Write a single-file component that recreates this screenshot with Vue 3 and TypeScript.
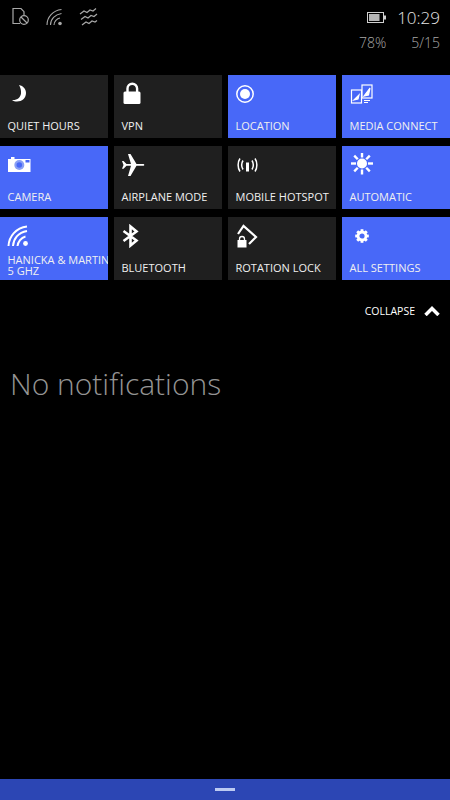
<script setup lang="ts">
interface Tile {
  label: string
  icon: string
  on?: boolean
}

const tiles: Tile[] = [
  { label: 'QUIET HOURS', icon: 'moon' },
  { label: 'VPN', icon: 'lock' },
  { label: 'LOCATION', icon: 'location', on: true },
  { label: 'MEDIA CONNECT', icon: 'media', on: true },
  { label: 'CAMERA', icon: 'camera', on: true },
  { label: 'AIRPLANE MODE', icon: 'plane' },
  { label: 'MOBILE HOTSPOT', icon: 'hotspot' },
  { label: 'AUTOMATIC', icon: 'sun', on: true },
  { label: 'HANICKA & MARTIN 5 GHZ', icon: 'wifi', on: true },
  { label: 'BLUETOOTH', icon: 'bluetooth' },
  { label: 'ROTATION LOCK', icon: 'rotation' },
  { label: 'ALL SETTINGS', icon: 'gear', on: true },
]

const sunRays = [0, 45, 90, 135, 180, 225, 270, 315]
const gearTeeth = [0, 45, 90, 135, 180, 225, 270, 315]
</script>

<template>
  <div class="screen">
    <div class="status">
      <div class="status-icons">
        <svg width="20" height="20" viewBox="0 0 20 20" fill="none" stroke="#a8a8a8" stroke-width="1.2">
          <path d="M9 16.500H2V1.500h8l3 3.200V8" />
          <circle cx="13" cy="13" r="4.300" />
          <path d="M10 10l6 6" />
        </svg>
        <svg width="20" height="20" viewBox="0 0 20 20" fill="none" stroke="#a8a8a8" stroke-width="1.1">
          <path d="M2 18C2 10 8 3.500 16.500 2.500" />
          <path d="M5.500 18C5.500 12 10 7.500 16.500 6.500" />
          <path d="M9 18C9 14.500 12 11.500 15 11" />
          <circle cx="15" cy="16.500" r="1.800" fill="#a8a8a8" stroke="none" />
        </svg>
        <svg class="waves" width="20" height="20" viewBox="0 0 20 20" fill="none" stroke="#a8a8a8" stroke-width="1.200">
          <path d="M1 7l4-3 3 1.500 3-2.500 3 1 3-2.500" />
          <path d="M2 12.500l4-3 3 1.500 3-2.500 3 1 3-2.500" />
          <path d="M3 18l4-3 3 1.500 3-2.500 3 1 2-1.500" />
        </svg>
      </div>
      <div class="status-right">
        <div class="status-top">
          <svg class="battery" width="19" height="11" viewBox="0 0 19 11">
            <rect x="0.500" y="0.500" width="16" height="10" fill="none" stroke="#d0d0d0" />
            <rect x="2" y="2" width="10.500" height="7" fill="#b5b5b5" />
            <rect x="17" y="3.500" width="2" height="4" fill="#d0d0d0" />
          </svg>
          <span class="time">10:29</span>
        </div>
        <div class="status-bottom">
          <span>78%</span>
          <span>5/15</span>
        </div>
      </div>
    </div>

    <div class="tiles">
      <div v-for="tile in tiles" :key="tile.label" class="tile" :class="{ on: tile.on }">
        <div class="tile-icon">
          <svg v-if="tile.icon === 'moon'" width="24" height="24" viewBox="0 0 24 24" fill="#fff">
            <path d="M12 3c4.500 1 7 4 7 8 0 5-4 8.500-9 8.500-2 0-3.500-.5-5-1.500 5 .5 8.500-2.500 9-6.500.3-3-.5-6-2-8.500z" />
          </svg>
          <svg v-else-if="tile.icon === 'lock'" width="24" height="24" viewBox="0 0 24 24">
            <path d="M6.500 10V6.500a4.800 4.800 0 0 1 9.600 0V10" fill="none" stroke="#fff" stroke-width="2.400" />
            <rect x="2.500" y="9.500" width="17" height="12.500" rx="1.500" fill="#fff" />
          </svg>
          <svg v-else-if="tile.icon === 'location'" width="24" height="24" viewBox="0 0 24 24">
            <circle cx="10" cy="12" r="8.200" fill="none" stroke="#fff" stroke-width="1.500" />
            <circle cx="10" cy="12" r="5" fill="#fff" />
          </svg>
          <svg v-else-if="tile.icon === 'media'" width="24" height="24" viewBox="0 0 24 24" fill="none" stroke="#fff" stroke-width="1.200">
            <rect x="2.500" y="8" width="10" height="13" />
            <rect x="13" y="3" width="10" height="13" />
            <path d="M5 18l5-5-1 4z" fill="#fff" />
            <path d="M15 14l6-8-1.500 7z" fill="#fff" />
            <path d="M15 18.500h6M15 20.500h4" />
          </svg>
          <svg v-else-if="tile.icon === 'camera'" width="24" height="24" viewBox="0 0 24 24">
            <path d="M1 6h3V4h3.500v2H23.500V19H1z" fill="#fff" />
            <circle cx="12.300" cy="12" r="5" fill="#8aa0f5" />
            <circle cx="12.300" cy="12" r="2.800" fill="#4868f8" />
            <rect x="18.500" y="7" width="4" height="2.500" fill="#4868f8" />
          </svg>
          <svg v-else-if="tile.icon === 'plane'" width="24" height="24" viewBox="0 0 24 24" fill="#fff">
            <path d="M1 8h1.500l3 3h4.500L7 1h2.500L15.500 11h7c1 0 1 1.800 0 1.800h-7L9.500 23H7l3-10.200H5.500l-3 3H1l1.500-3.900z" />
          </svg>
          <svg v-else-if="tile.icon === 'hotspot'" width="24" height="24" viewBox="0 0 24 24" fill="none" stroke="#fff" stroke-width="1.500">
            <path d="M8 7.500c-1.500 2.500-1.500 6.500 0 9" />
            <path d="M5 5.500c-2.500 3.500-2.500 9.500 0 13" />
            <path d="M17 7.500c1.500 2.500 1.500 6.500 0 9" />
            <path d="M20 5.500c2.500 3.500 2.500 9.500 0 13" />
            <rect x="11" y="9.500" width="3" height="9" fill="#fff" stroke="none" />
          </svg>
          <svg v-else-if="tile.icon === 'sun'" width="24" height="24" viewBox="0 0 24 24" fill="#fff">
            <g transform="translate(1 -1.500)">
              <circle cx="12" cy="12" r="5" />
              <rect v-for="r in sunRays" :key="r" x="10.800" y="1" width="2.400" height="5" :transform="`rotate(${r} 12 12)`" />
            </g>
          </svg>
          <svg v-else-if="tile.icon === 'wifi'" width="24" height="24" viewBox="0 0 24 24" fill="none" stroke="#fff" stroke-width="2">
            <path d="M1.500 22C2 12 9 4 20 2.500" />
            <path d="M6 22C6.500 15 11 8.500 20 7" />
            <path d="M10.500 22C11 18 14 13.500 18.500 12.500" />
            <circle cx="18.500" cy="19.500" r="2.400" fill="#fff" stroke="none" />
          </svg>
          <svg v-else-if="tile.icon === 'bluetooth'" width="24" height="24" viewBox="0 0 24 24" fill="none" stroke="#fff" stroke-width="2.600">
            <path d="M2.500 7l13 9.500-6 5V2.500l6 5-13 9.500" />
          </svg>
          <svg v-else-if="tile.icon === 'rotation'" width="24" height="24" viewBox="0 0 24 24">
            <path d="M3 10L8.500 2 21 13l-7 7" fill="none" stroke="#fff" stroke-width="2.200" />
            <path d="M4.500 16.500V15a2.500 2.500 0 0 1 5 0v1.500" fill="none" stroke="#fff" stroke-width="1.300" />
            <rect x="2.500" y="16" width="9" height="7.500" fill="#fff" />
          </svg>
          <svg v-else-if="tile.icon === 'gear'" class="gear" width="14" height="14" viewBox="0 0 14 14">
            <rect v-for="r in gearTeeth" :key="r" x="5.600" y="0.200" width="2.800" height="3" fill="#fff" :transform="`rotate(${r} 7 7)`" />
            <circle cx="7" cy="7" r="4" fill="none" stroke="#fff" stroke-width="2.800" />
          </svg>
        </div>
        <div class="tile-label" :class="{ wrap: tile.icon === 'wifi' }">{{ tile.label }}</div>
      </div>
    </div>

    <div class="collapse">
      <span>COLLAPSE</span>
      <svg width="16" height="10" viewBox="0 0 16 10" fill="none" stroke="#fff" stroke-width="3.500">
        <path d="M1.500 9L8 2.500 14.500 9" />
      </svg>
    </div>

    <div class="empty">No notifications</div>

    <div class="bottom-bar">
      <div class="handle"></div>
    </div>
  </div>
</template>

<style>
html,
body {
  margin: 0;
  background: #000;
}
</style>

<style scoped>
.screen {
  position: relative;
  width: 450px;
  height: 800px;
  overflow: hidden;
  background: #000;
  font-family: "Open Sans", "Noto Sans", sans-serif;
  color: #fff;
}

.status {
  display: flex;
  justify-content: space-between;
  height: 75px;
  box-sizing: border-box;
  padding: 7px 10px 0 11px;
}

.status-icons {
  display: flex;
  gap: 14px;
  align-items: flex-start;
}

.status-right {
  display: flex;
  flex-direction: column;
  align-items: flex-end;
}

.status-top {
  display: flex;
  align-items: center;
  gap: 11px;
  height: 21px;
}

.time {
  font-size: 17px;
  font-weight: 300;
  color: #e6e6e6;
  line-height: 21px;
}

.status-bottom {
  display: flex;
  gap: 25px;
  margin-top: 5px;
  font-size: 14px;
  font-weight: 300;
  line-height: 20px;
  color: #a8a8a8;
}

.tiles {
  display: grid;
  grid-template-columns: repeat(4, 108px);
  grid-auto-rows: 62.6px;
  column-gap: 6px;
  row-gap: 8.4px;
}

.tile {
  position: relative;
  overflow: hidden;
  background: #1f1f1f;
}

.tile.on {
  background: #4868f8;
}

.tile-icon {
  position: absolute;
  left: 7px;
  top: 7px;
  width: 24px;
  height: 24px;
  display: flex;
  align-items: center;
  justify-content: center;
}

.gear {
  margin-left: 2px;
}

.tile-label {
  position: absolute;
  left: 7.5px;
  bottom: 5px;
  font-size: 11px;
  font-weight: 500;
  line-height: 15px;
  white-space: nowrap;
  color: #f0f0f0;
}

.tile-label.wrap {
  width: 108px;
  bottom: 4px;
  white-space: normal;
  line-height: 11px;
}

.collapse {
  display: flex;
  justify-content: flex-end;
  align-items: center;
  gap: 9px;
  height: 20px;
  margin-top: 21px;
  padding-right: 10px;
  font-size: 10.5px;
}

.empty {
  margin-top: 43px;
  padding-left: 10px;
  font-size: 30px;
  font-weight: 300;
  line-height: 40px;
  color: #949494;
}

.bottom-bar {
  position: absolute;
  left: 0;
  right: 0;
  bottom: 0;
  height: 21px;
  background: #2c46b4;
  display: flex;
  justify-content: center;
  padding-top: 9px;
  box-sizing: border-box;
}

.handle {
  width: 20px;
  height: 3px;
  background: #bccaf2;
}
</style>
